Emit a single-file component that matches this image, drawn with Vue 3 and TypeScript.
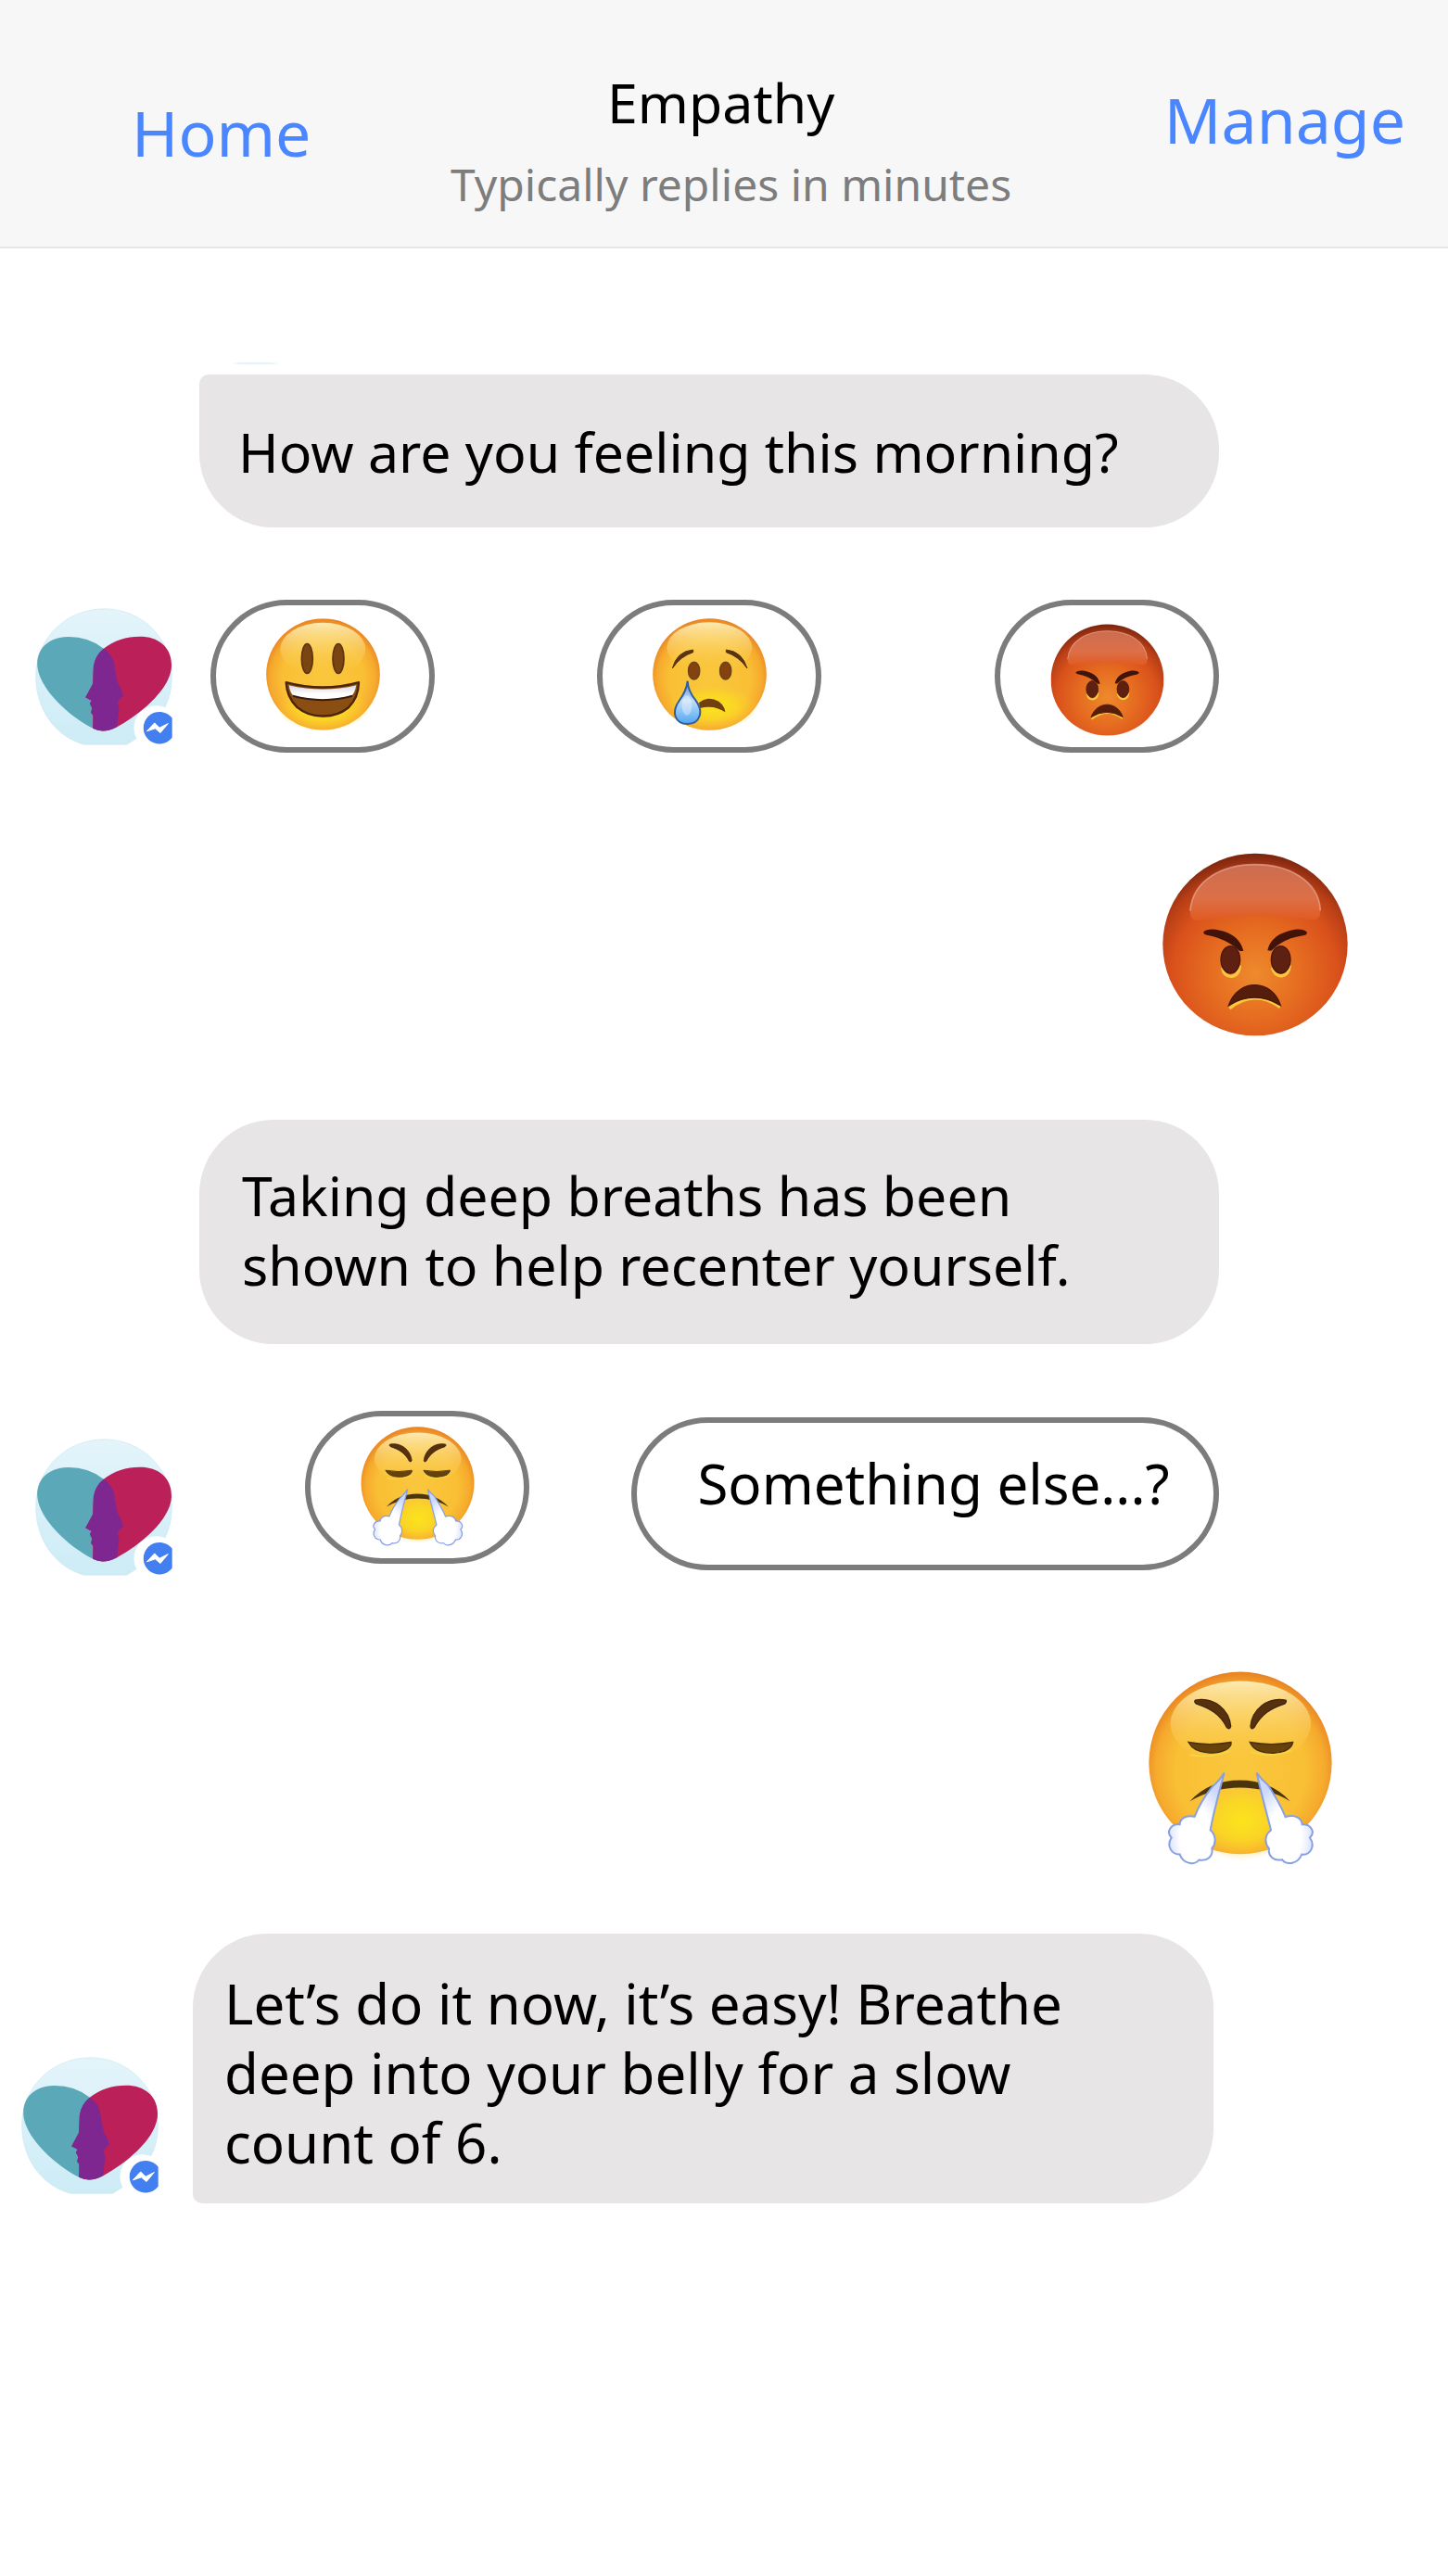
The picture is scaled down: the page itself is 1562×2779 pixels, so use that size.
<script setup lang="ts">
interface Mood {
  id: string
  label: string
  box: string
}

const moods: Mood[] = [
  { id: 'happy', label: 'Happy', box: '203 95 369 362' },
  { id: 'sad', label: 'Sad', box: '222 100 369 363' },
  { id: 'angry', label: 'Angry', box: '42 43 600 594' },
]
</script>

<template>
  <div class="chat">
    <svg class="defs" aria-hidden="true">
      <defs>
        <radialGradient id="yellow" cx="0.5" cy="0.54" r="0.55">
          <stop offset="0" stop-color="#fac73c" />
          <stop offset="0.65" stop-color="#f9bf35" />
          <stop offset="0.84" stop-color="#f6aa2d" />
          <stop offset="1" stop-color="#e57c22" />
        </radialGradient>
        <linearGradient id="shine" x1="0" y1="0" x2="0" y2="1">
          <stop offset="0" stop-color="#fdeeb8" stop-opacity="0.95" />
          <stop offset="1" stop-color="#fbc93f" stop-opacity="0" />
        </linearGradient>
        <radialGradient id="chin" cx="0.5" cy="0.5" r="0.5">
          <stop offset="0" stop-color="#fbe41c" />
          <stop offset="0.5" stop-color="#fbdc20" stop-opacity="0.75" />
          <stop offset="1" stop-color="#fccb30" stop-opacity="0" />
        </radialGradient>
        <radialGradient id="red" cx="0.5" cy="0.66" r="0.66">
          <stop offset="0" stop-color="#ee8a2c" />
          <stop offset="0.4" stop-color="#e56a20" />
          <stop offset="0.68" stop-color="#d9511b" />
          <stop offset="0.85" stop-color="#b83e16" />
          <stop offset="1" stop-color="#78240f" />
        </radialGradient>
        <linearGradient id="gloss" x1="0" y1="0" x2="0" y2="1">
          <stop offset="0" stop-color="#cc6c50" />
          <stop offset="0.6" stop-color="#dc7048" />
          <stop offset="1" stop-color="#e15a21" />
        </linearGradient>
        <linearGradient id="tear" x1="0" y1="0" x2="0" y2="1">
          <stop offset="0" stop-color="#4b88d8" />
          <stop offset="0.45" stop-color="#c3defa" />
          <stop offset="1" stop-color="#4fa6f2" />
        </linearGradient>
        <radialGradient id="puff" cx="0.5" cy="0.7" r="0.6">
          <stop offset="0.5" stop-color="#ffffff" />
          <stop offset="1" stop-color="#ccd8fb" />
        </radialGradient>
        <linearGradient id="sky" x1="0" y1="0" x2="0" y2="1">
          <stop offset="0" stop-color="#e4f4fb" />
          <stop offset="1" stop-color="#cdecf6" />
        </linearGradient>
        <linearGradient id="teeth" x1="0" y1="0" x2="0" y2="1">
          <stop offset="0" stop-color="#d8d6de" />
          <stop offset="0.6" stop-color="#ffffff" />
        </linearGradient>
      </defs>

      <symbol id="happy" viewBox="203 95 369 362">
        <ellipse cx="387.500" cy="276" rx="184" ry="180.500" fill="url(#yellow)" />
        <ellipse cx="387" cy="385" rx="150" ry="75" fill="url(#chin)" />
        <ellipse cx="387" cy="195" rx="138" ry="86" fill="url(#shine)" />
        <ellipse cx="336" cy="225" rx="18" ry="48" fill="#7b4512" stroke="#5b3410" stroke-width="5" />
        <ellipse cx="437" cy="225" rx="18" ry="48" fill="#7b4512" stroke="#5b3410" stroke-width="5" />
        <path d="M268 302Q387 334 503 302Q502 352 469 384Q434 412 387 411Q339 412 303 382Q270 350 268 302Z" fill="#8b4e12" stroke="#4b2410" stroke-width="7" stroke-linejoin="round" />
        <path d="M277 311Q387 337 495 311Q491 334 481 344Q387 371 291 345Q280 333 277 311Z" fill="url(#teeth)" />
        <path d="M290 346Q387 372 482 346" fill="none" stroke="#351b12" stroke-width="6" />
      </symbol>

      <symbol id="sad" viewBox="222 100 369 363">
        <ellipse cx="406.500" cy="281.500" rx="184" ry="181" fill="url(#yellow)" />
        <ellipse cx="415" cy="385" rx="150" ry="75" fill="url(#chin)" />
        <ellipse cx="406" cy="195" rx="138" ry="82" fill="url(#shine)" />
        <path d="M286 262Q300 207 353 202L353 210Q312 223 286 262Z" fill="#5b3410" stroke="#5b3410" stroke-width="3" />
        <path d="M528 262Q512 207 460 202L460 210Q501 223 528 262Z" fill="#5b3410" stroke="#5b3410" stroke-width="3" />
        <ellipse cx="356" cy="270" rx="18" ry="28" fill="#85420f" stroke="#6d4414" stroke-width="5" />
        <ellipse cx="458" cy="270" rx="18" ry="28" fill="#85420f" stroke="#6d4414" stroke-width="5" />
        <path d="M372 373Q402 349 436 369Q455 382 457 404Q421 379 375 391Z" fill="#70400f" />
        <path d="M335 303Q336 334 361 365C389 402 375 442 335 442C295 442 281 405 308 367Q332 334 335 303Z" fill="url(#tear)" stroke="#315f9d" stroke-width="6" />
        <ellipse cx="333" cy="382" rx="16" ry="32" fill="#ffffff" opacity="0.35" />
      </symbol>

      <symbol id="angry" viewBox="42 43 600 594">
        <ellipse cx="342" cy="340" rx="299" ry="295" fill="url(#red)" />
        <path d="M132 231C139 132 236 81 342 81C448 81 548 132 553 230C554 257 541 264 512 259Q342 232 170 261C143 265 131 257 132 231Z" fill="url(#gloss)" />
        <path d="M132 231C139 132 236 81 342 81C448 81 548 132 553 230" fill="none" stroke="#e2a08a" stroke-width="5" opacity="0.8" />
        <path d="M236 414Q240 443 264 443Q291 440 292 407M397 414Q404 441 427 442Q451 439 454 407M259 547Q338 482 423 543" fill="none" stroke="#f8c83e" stroke-width="10" />
        <ellipse cx="262" cy="389" rx="31" ry="44" fill="#5e2011" stroke="#4a160d" stroke-width="4" />
        <ellipse cx="425" cy="389" rx="31" ry="44" fill="#5e2011" stroke="#4a160d" stroke-width="4" />
        <path d="M175 299Q186 288 214 291C263 299 293 318 304 361L292 361Q248 320 186 309Q174 307 175 299Z" fill="#421309" />
        <path d="M510 300Q498 288 470 291C424 300 391 318 382 359L394 360Q432 320 500 310Q510 308 510 300Z" fill="#421309" />
        <path d="M256 537C288 447 397 451 424 537Q340 486 256 537Z" fill="#571d0c" stroke="#4a160a" stroke-width="4" />
      </symbol>

      <symbol id="steam" viewBox="58 38 594 626">
        <ellipse cx="355" cy="334" rx="296" ry="295" fill="url(#yellow)" />
        <ellipse cx="360" cy="520" rx="165" ry="130" fill="url(#chin)" />
        <ellipse cx="356" cy="207" rx="227" ry="138" fill="url(#shine)" />
        <path d="M209 131C269 119 319 162 324 216Q320 228 311 219C289 176 258 158 213 143Q204 136 209 131Z" fill="#57310e" stroke="#402711" stroke-width="4" />
        <path d="M502 131C442 119 393 162 388 216Q391 228 400 219C424 176 452 158 498 143Q506 136 502 131Z" fill="#57310e" stroke="#402711" stroke-width="4" />
        <path d="M187 267Q255 280 325 267C329 287 293 305 250 301Q204 299 187 267ZM386 267Q455 280 525 267C520 291 491 304 452 302Q400 300 386 267Z" fill="#67420b" stroke="#49300d" stroke-width="4" />
        <path d="M192 308Q253 320 322 296M390 298Q448 320 520 294" fill="none" stroke="#f4d842" stroke-width="5" />
        <path d="M192 458Q253 390 354 390Q454 390 516 458Q443 414 354 414Q267 414 192 458Z" fill="#4b350c" />
        <path d="M303 366Q285 394 265 410Q225 460 207 508C176 500 159 518 159 533C129 531 114 558 132 576C115 602 132 631 159 630C168 659 205 668 221 648C247 653 268 637 263 610C280 592 273 563 258 552C262 527 277 462 303 366Z" fill="url(#puff)" stroke="#889fe2" stroke-width="6" />
        <path d="M408 366Q422 387 444 405Q483 464 501 509C533 499 554 515 555 533C585 531 598 560 580 576C599 603 581 634 554 630C542 661 505 667 490 647C464 653 443 635 448 611C430 590 436 565 454 552C447 518 430 467 408 366Z" fill="url(#puff)" stroke="#889fe2" stroke-width="6" />
      </symbol>

      <symbol id="avatar" viewBox="53 48 445 444">
        <path d="M211 490C120 465 55 378 55 270C55 145 153 50 277 50C399 50 496 145 496 270Q496 330 472 372Q375 385 382 470L350 490Z" fill="url(#sky)" stroke="#cfe7ed" stroke-width="2" />
        <path d="M275 179Q226 140 158 141C91 143 56 184 60 237C66 307 157 395 240 438Q275 455 317 432L317 350L337 338L319 292Q321 215 275 179Z" fill="#5ba9b8" />
        <path d="M275 179Q328 137 403 140C463 145 497 183 495 237C491 310 399 389 317 434Q275 456 240 438L240 391L234 385L237 371L230 357L236 347L216 337L240 294L242 237Q247 202 275 179Z" fill="#bb2059" />
        <path d="M275 179Q308 201 311 241L320 290Q338 318 338 333L319 350L325 373L318 432Q276 456 240 438L242 397L234 388L238 373L230 357L236 348L216 338L240 292L242 237Q246 202 275 179Z" fill="#7e2790" />
        <circle cx="445" cy="436" r="72" fill="#ffffff" />
        <path d="M497 404A52 52 0 1 0 497 468Z" fill="#427ff1" />
        <path d="M415 447L440 420L456 436L484 422L459 452L442 438Z" fill="#ffffff" stroke="#ffffff" stroke-width="3" />
      </symbol>
    </svg>

    <header class="bar">
      <a class="nav home" href="#home">Home</a>
      <div class="heading">
        <h1 class="title">Empathy</h1>
        <p class="subtitle">Typically replies in minutes</p>
      </div>
      <a class="nav manage" href="#manage">Manage</a>
    </header>

    <main class="thread">
      <p class="bubble question">How are you feeling this morning?</p>

      <section class="turn moods">
        <svg class="avatar" role="img" aria-label="Empathy"><use href="#avatar" /></svg>
        <div class="options spread">
          <button v-for="mood in moods" :key="mood.id" class="pill face" :class="mood.id + '-choice'" type="button" :aria-label="mood.label">
            <svg class="emoji" :class="mood.id" :viewBox="mood.box"><use :href="'#' + mood.id" :x="mood.box.split(' ')[0]" :y="mood.box.split(' ')[1]" :width="mood.box.split(' ')[2]" :height="mood.box.split(' ')[3]" /></svg>
          </button>
        </div>
      </section>

      <div class="reply angry-reply">
        <svg class="big-angry" role="img" aria-label="Angry"><use href="#angry" /></svg>
      </div>

      <p class="bubble advice">Taking deep breaths has been<br />shown to help recenter yourself.</p>

      <section class="turn breathing">
        <svg class="avatar" role="img" aria-label="Empathy"><use href="#avatar" /></svg>
        <div class="options pair">
          <button class="pill face" type="button" aria-label="Breathe out">
            <svg class="emoji steam"><use href="#steam" /></svg>
          </button>
          <button class="pill other" type="button">Something else...?</button>
        </div>
      </section>

      <div class="reply steam-reply">
        <svg class="big-steam" role="img" aria-label="Breathing out"><use href="#steam" /></svg>
      </div>

      <section class="turn closing">
        <svg class="avatar" role="img" aria-label="Empathy"><use href="#avatar" /></svg>
        <p class="bubble instruction">Let’s do it now, it’s easy! Breathe<br />deep into your belly for a slow<br />count of 6.</p>
      </section>
    </main>
  </div>
</template>

<style>
body {
  background: #ffffff;
}
</style>

<style scoped>
.chat {
  min-height: 100vh;
  background: #ffffff;
  color: #000000;
  font-family: "Noto Sans", sans-serif;
  font-size: 59px;
  line-height: 75px;
}

.chat * {
  box-sizing: border-box;
}

.defs {
  position: absolute;
  width: 0;
  height: 0;
}

.bar {
  display: flex;
  align-items: flex-start;
  height: 268px;
  padding: 73px 46px 0 142px;
  background: #f7f7f7;
  border-bottom: 2px solid #e6e6e6;
}

.nav {
  color: #4a86ff;
  font-size: 68px;
  line-height: 96px;
  text-decoration: none;
}

.home {
  margin-top: 22px;
}

.manage {
  margin-top: 8px;
}

.heading {
  flex: 1;
  padding-right: 14px;
  text-align: center;
}

.title {
  margin: 0 22px 21px 0;
  font-size: 59px;
  font-weight: 400;
  line-height: 75px;
}

.subtitle {
  margin: 0;
  color: #7d7d7d;
  font-size: 48px;
  line-height: 60px;
}

.thread {
  display: flex;
  flex-direction: column;
  padding-top: 136px;
}

.bubble {
  margin: 0 247px 0 215px;
  border-radius: 80px;
  background: #e7e5e6;
  white-space: nowrap;
}

.question {
  position: relative;
  padding: 46px 42px 44px;
  border-top-left-radius: 10px;
}

.question::before {
  position: absolute;
  top: -13px;
  left: 36px;
  width: 48px;
  height: 2px;
  border-radius: 50%;
  background: #dff4fa;
  content: "";
}

.advice {
  margin-top: 90px;
  padding: 44px 46px 48px;
}

.instruction {
  flex: 1;
  margin: 0 253px 0 37px;
  padding: 38px 34px 28px;
  border-bottom-left-radius: 10px;
  font-size: 60px;
}

.turn {
  display: flex;
}

.moods {
  margin-top: 78px;
  padding: 0 247px 0 38px;
}

.moods .avatar {
  margin-top: 9px;
}

.avatar {
  flex: none;
  width: 148px;
  height: 148px;
}

.options {
  display: flex;
  flex: 1;
  align-items: flex-start;
}

.spread {
  justify-content: space-between;
  margin-left: 41px;
}

.sad-choice {
  margin-right: 12px;
}

.pill {
  height: 165px;
  padding: 0;
  border: 6px solid #7c7c7c;
  border-radius: 83px;
  background: #ffffff;
  color: #000000;
  font: inherit;
}

.face {
  display: flex;
  flex: none;
  justify-content: center;
  width: 242px;
}

.emoji {
  width: 123px;
  height: 121px;
  margin-top: 14px;
}

.angry {
  margin-top: 20px;
}

.steam {
  height: 129px;
  margin-top: 11px;
}

.reply {
  display: flex;
  justify-content: flex-end;
}

.angry-reply {
  margin-top: 108px;
  padding-right: 108px;
}

.big-angry {
  width: 200px;
  height: 198px;
}

.breathing {
  margin-top: 72px;
  padding: 0 247px 0 38px;
}

.breathing .avatar {
  margin-top: 30px;
}

.pair {
  gap: 110px;
  margin-left: 143px;
}

.other {
  flex: 1;
  margin-top: 7px;
  padding: 0 0 23px 18px;
  font-size: 60px;
}

.steam-reply {
  margin-top: 103px;
  padding-right: 125px;
}

.big-steam {
  width: 198px;
  height: 209px;
}

.closing {
  align-items: flex-end;
  margin-top: 74px;
  padding-left: 23px;
}

.closing .avatar {
  margin-bottom: 10px;
}
</style>
